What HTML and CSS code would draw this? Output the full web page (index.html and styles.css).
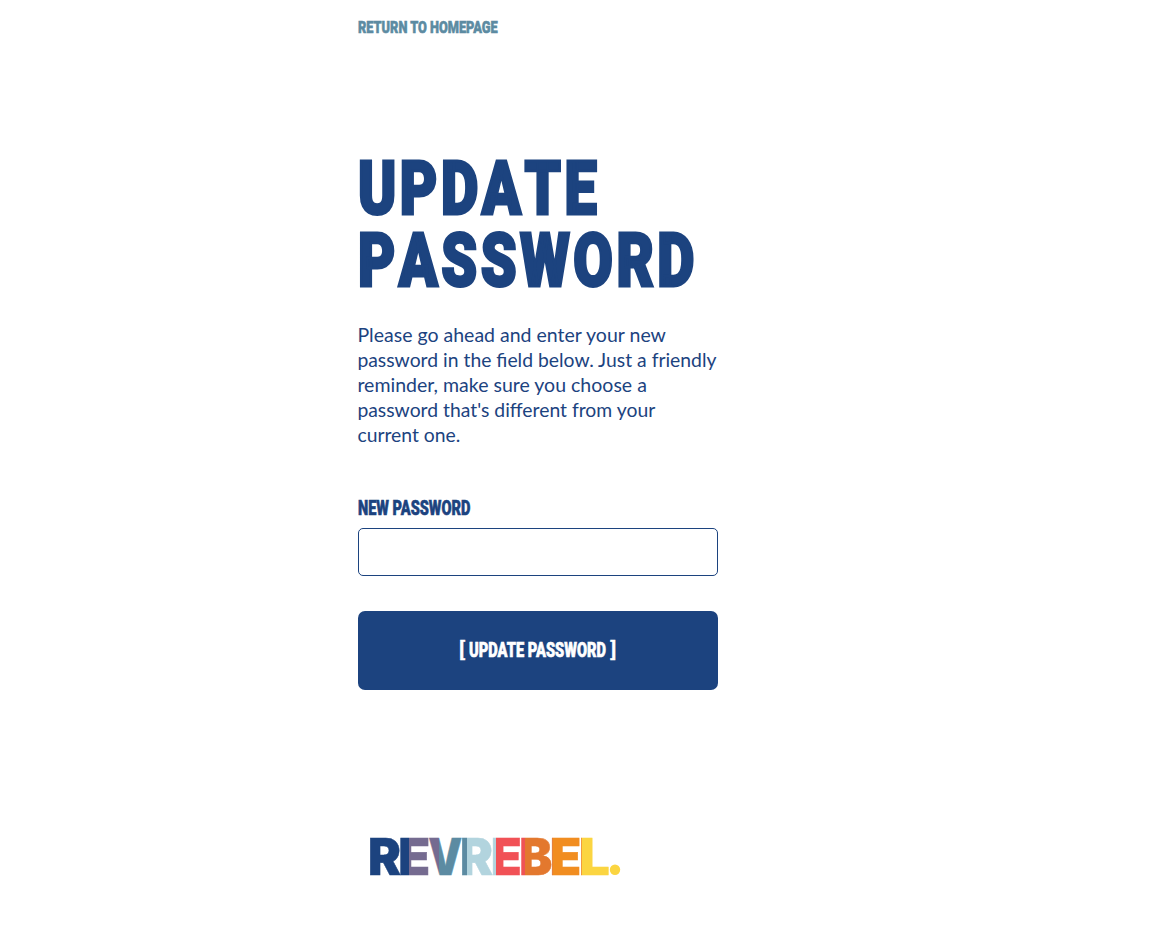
FILE: index.html
```
<!DOCTYPE html>
<html lang="en">
<head>
<meta charset="utf-8">
<title>Update Password</title>
<link rel="stylesheet" href="styles.css">
</head>
<body>
<main class="page">
  <a class="home-link" href="#"><span class="condensed">RETURN TO HOMEPAGE</span></a>
  <h1 class="title"><span class="title-line first">UPDATE</span><span class="title-line second">PASSWORD</span></h1>
  <p class="intro"><span class="l1">Please go ahead and enter your new</span><span class="l2">password in the field below. Just a friendly</span><span class="l3">reminder, make sure you choose a</span><span class="l4">password that's different from your</span><span class="l5">current one.</span></p>
  <form class="form">
    <label class="label" for="password"><span class="condensed">NEW PASSWORD</span></label>
    <input class="field" id="password" type="password">
    <button class="submit" type="button"><span class="condensed"><span class="bracket open">[</span> UPDATE PASSWORD <span class="bracket close">]</span></span></button>
  </form>
  <svg class="logo" width="252" height="40" viewBox="0 0 252 40" role="img" aria-label="RevRebel">
    <defs>
      <linearGradient id="v" gradientUnits="userSpaceOnUse" x1="0" y1="0" x2="252" y2="0"><stop offset=".2738" stop-color="#756b90"/><stop offset=".2738" stop-color="#5c8ba2"/></linearGradient>
      <linearGradient id="e1" gradientUnits="userSpaceOnUse" x1="0" y1="0" x2="252" y2="0"><stop offset=".1567" stop-color="#1c437f"/><stop offset=".1567" stop-color="#756b90"/></linearGradient>
      <linearGradient id="r2" gradientUnits="userSpaceOnUse" x1="0" y1="0" x2="252" y2="0"><stop offset=".3869" stop-color="#5c8ba2"/><stop offset=".3869" stop-color="#b2d4de"/></linearGradient>
      <linearGradient id="e2" gradientUnits="userSpaceOnUse" x1="0" y1="0" x2="252" y2="0"><stop offset=".4988" stop-color="#b2d4de"/><stop offset=".4988" stop-color="#f15156"/></linearGradient>
      <linearGradient id="b" gradientUnits="userSpaceOnUse" x1="0" y1="0" x2="252" y2="0"><stop offset=".6131" stop-color="#ef5355"/><stop offset=".6131" stop-color="#e3782e"/></linearGradient>
      <linearGradient id="e3" gradientUnits="userSpaceOnUse" x1="0" y1="0" x2="252" y2="0"><stop offset=".7262" stop-color="#e3782e"/><stop offset=".7262" stop-color="#f18d20"/></linearGradient>
      <linearGradient id="l" gradientUnits="userSpaceOnUse" x1="0" y1="0" x2="252" y2="0"><stop offset=".8413" stop-color="#f18d20"/><stop offset=".8413" stop-color="#fbd541"/></linearGradient>
    </defs>
    <g class="logo-letters">
      <text x="-2" y="37.5" textLength="33" lengthAdjust="spacingAndGlyphs" fill="#1c437f" stroke="#1c437f">R</text>
      <text x="28.2" y="37.5" textLength="32" lengthAdjust="spacingAndGlyphs" fill="url(#e1)" stroke="url(#e1)">E</text>
      <text x="58.2" y="37.5" textLength="34" lengthAdjust="spacingAndGlyphs" fill="url(#v)" stroke="url(#v)">V</text>
      <text x="90" y="37.5" textLength="33" lengthAdjust="spacingAndGlyphs" fill="url(#r2)" stroke="url(#r2)">R</text>
      <text x="120.7" y="37.5" textLength="31" lengthAdjust="spacingAndGlyphs" fill="url(#e2)" stroke="url(#e2)">E</text>
      <text x="149.2" y="37.5" textLength="33" lengthAdjust="spacingAndGlyphs" fill="url(#b)" stroke="url(#b)">B</text>
      <text x="179.7" y="37.5" textLength="31.5" lengthAdjust="spacingAndGlyphs" fill="url(#e3)" stroke="url(#e3)">E</text>
      <text x="208.7" y="37.5" textLength="31" lengthAdjust="spacingAndGlyphs" fill="url(#l)" stroke="url(#l)">L</text>
    </g>
    <circle cx="245" cy="32.8" r="5.2" fill="#fbd541"/>
  </svg>
</main>
</body>
</html>
```

FILE: styles.css
```
* { box-sizing: border-box; }
body { margin: 0; background: #fff; color: #1c437f; }
.page { width: 360px; margin-left: 358px; display: flex; flex-direction: column; align-items: flex-start; }
.condensed { display: inline-block; white-space: nowrap; font-family: Roboto, sans-serif; font-weight: 900; transform: scaleX(.75); transform-origin: 0 50%; -webkit-text-stroke: .6px currentColor; }
.home-link { margin-top: 17px; height: 20px; font-size: 17px; line-height: 20px; color: #5c8ba2; text-decoration: none; }
.title { margin: 115px 0 0; font: 900 75px/72px Roboto, sans-serif; font-kerning: none; }
.title-line { display: block; width: max-content; letter-spacing: 4.5px; transform: scaleX(.77); transform-origin: 0 50%; -webkit-text-stroke: 3px currentColor; }
.title .second { transform: scaleX(.765); }
.intro { margin: 26px 0 0; font: 400 20px/25px Lato, sans-serif; white-space: nowrap; }
.intro span { display: block; width: max-content; transform: translateX(-.6px) scaleX(.967); transform-origin: 0 50%; }
.intro .l1, .intro .l3 { transform: translateX(-.6px) scaleX(.976); }
.form { width: 100%; margin-top: 51px; display: flex; flex-direction: column; }
.label { height: 22px; font-size: 19.5px; line-height: 22px; }
.label .condensed { transform: scaleX(.745); }
.field { width: 360px; height: 48px; margin: 8px 0 35px; padding: 0 12px; border: 1px solid #1c437f; border-radius: 5px; background: #fff; outline: 0; }
.submit { height: 79px; padding: 0; border: 0; border-radius: 7px; background: #1c437f; color: #fff; font-size: 19.5px; line-height: 22px; }
.submit .condensed { transform: scaleX(.75); transform-origin: 50% 50%; }
.bracket { display: inline-block; font-weight: 500; transform: scaleX(1.6); -webkit-text-stroke: .3px currentColor; }
.open { margin-right: 2px; }
.close { margin-left: 2px; }
.logo { display: block; margin: 147px 0 0 12px; overflow: visible; }
.logo-letters { font: 900 50.8px Inter, sans-serif; stroke-width: .5px; }
```
